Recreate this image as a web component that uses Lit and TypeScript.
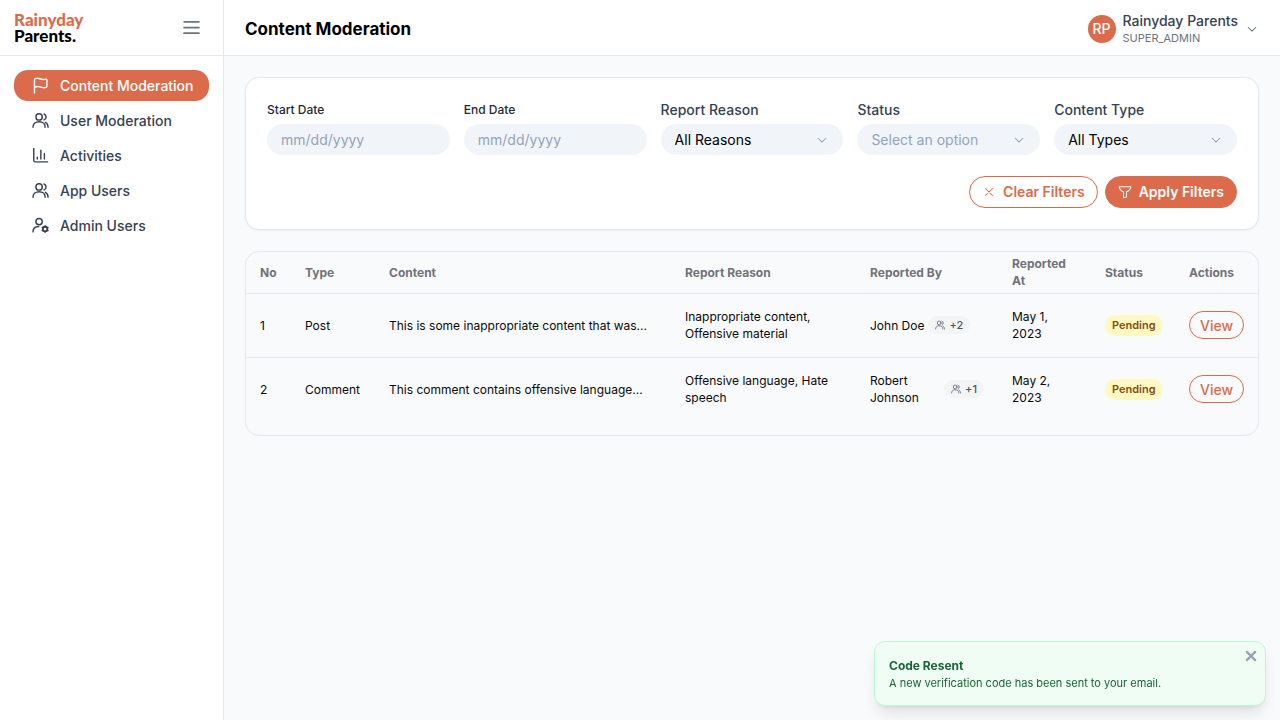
import { LitElement, html, css, svg } from "lit";
import { customElement, state } from "lit/decorators.js";

const icons = {
  flag: svg`<path d="M3.500 22.500V4c0-.8.300-1.300 1-1.600C6.500 1.500 8.500 1.600 11 2.500c2.700 1 5 1.500 8 .6 1.300-.4 2 .1 2 1.300V13c0 .8-.4 1.300-1.200 1.600-3 1-6 .4-8.600-.6-2.700-1-5.200-.8-7.700.8"/>`,
  users: svg`<circle cx="10" cy="7" r="4.500"/><path d="M1.500 21.500v-.7c0-4.200 3.700-7 8.500-7s8.500 2.800 8.500 7v.7M17 2.800a4.500 4.500 0 0 1 0 8.400M19 14.500c2.300 1.200 3.700 3.400 3.700 7"/>`,
  chart: svg`<path d="M2.500 2v17a2 2 0 0 0 2 2h17.500M7.500 14.500V17M12.500 4.500V17M17.500 9v8"/>`,
  userCog: svg`<circle cx="10" cy="6.500" r="4.500"/><path d="M1.500 21v-.5c0-4.200 3.500-6.800 8-7"/><circle cx="18.500" cy="17" r="3.200" stroke-width="2.600"/><path d="M18.500 12.300v1M18.500 20.700v1M14.400 14.700l.9.500M21.700 18.800l.9.500M14.400 19.300l.9-.5M21.700 15.200l.9-.5"/>`,
  menu: svg`<path d="M3.500 5.500h17M3.500 12h17M3.500 18.500h17"/>`,
  chevron: svg`<path d="m5.500 9 6.500 6.500L18.500 9"/>`,
  close: svg`<path d="m5 5 14 14M19 5 5 19"/>`,
  cross: svg`<path d="m6 6 12 12M18 6 6 18"/>`,
  filter: svg`<path d="M2 3h20c0 4-3.500 7-7.500 9v8.500l-5 1.500V12C5.500 10 2 7 2 3z"/>`,
};

const icon = (name: keyof typeof icons) =>
  html`<svg class="icon" viewBox="0 0 24 24" aria-hidden="true">${icons[name]}</svg>`;

const nav: { label: string; icon: keyof typeof icons }[] = [
  { label: "Content Moderation", icon: "flag" },
  { label: "User Moderation", icon: "users" },
  { label: "Activities", icon: "chart" },
  { label: "App Users", icon: "users" },
  { label: "Admin Users", icon: "userCog" },
];

const reports = [
  { no: 1, type: "Post", content: "This is some inappropriate content that was...", reason: "Inappropriate content, Offensive material", by: "John Doe", more: 2, at: "May 1, 2023", status: "Pending" },
  { no: 2, type: "Comment", content: "This comment contains offensive language...", reason: "Offensive language, Hate speech", by: "Robert Johnson", more: 1, at: "May 2, 2023", status: "Pending" },
];

@customElement("app-root")
export class AppRoot extends LitElement {
  @state() private toastOpen = true;
  @state() private current = 0;

  static styles = css`
    :host {
      display: grid;
      grid-template-columns: 224px minmax(0, 1fr);
      min-height: 100vh;
      background: #f9fafc;
      color: #09090b;
      font: 400 14px/20px Inter, sans-serif;
    }
    * { box-sizing: border-box; }
    button, input, select { font: inherit; color: inherit; margin: 0; border: 0; background: none; padding: 0; }
    button, select { cursor: pointer; }
    .icon {
      width: 14px; height: 14px; flex: none;
      fill: none; stroke: currentColor; stroke-width: 1.8;
      stroke-linecap: round; stroke-linejoin: round;
    }
    aside { background: #fff; border-right: 1px solid #e5e7eb; }
    .brand {
      display: flex; align-items: center; justify-content: space-between;
      height: 56px; padding: 0 21px 0 14px; border-bottom: 1px solid #e5e7eb;
    }
    .logo { font: 900 17px/16px Lato, sans-serif; color: #000; text-decoration: none; }
    .logo span { display: block; }
    .logo .top { color: #db6b4a; }
    .menu { display: flex; color: #6b7280; }
    .menu .icon { width: 21px; height: 21px; stroke-width: 2; }
    nav { display: flex; flex-direction: column; gap: 4px; padding: 14px; }
    .link {
      display: flex; align-items: center; gap: 11px; height: 31px; padding: 0 14px 0 18px;
      border-radius: 14px; color: #374151; font-weight: 500; text-decoration: none; white-space: nowrap;
    }
    .link .icon { width: 17px; height: 17px; stroke-width: 2; }
    .link.active { background: #db6b4a; color: #fff; }
    header {
      display: flex; align-items: center; justify-content: space-between;
      height: 56px; padding: 2px 21px 0; background: #fff; border-bottom: 1px solid #e5e7eb;
    }
    h1 { margin: 0; font-size: 17px; line-height: 24px; font-weight: 700; color: #000; }
    .account { display: flex; align-items: center; gap: 7px; text-align: left; }
    .avatar {
      display: grid; place-items: center; width: 28px; height: 28px; border-radius: 50%;
      background: #db6b4a; color: #fff; font-weight: 500;
    }
    .who { display: grid; color: #374151; font-weight: 500; line-height: 18px; }
    .role { font-size: 11px; line-height: 16px; font-weight: 400; color: #6b7280; }
    .account .icon { color: #6b7280; }
    main { display: grid; gap: 21px; padding: 21px; }
    .filters {
      display: grid; gap: 21px; padding: 21px; background: #fff;
      border: 1px solid #e5e7eb; border-radius: 14px; box-shadow: 0 1px 2px rgb(0 0 0 / 5%);
    }
    .fields { display: grid; grid-template-columns: repeat(auto-fit, minmax(160px, 1fr)); gap: 14px; align-items: end; }
    .field { display: grid; gap: 4px; color: #334155; font-weight: 500; }
    .date label { font-size: 12px; line-height: 21px; color: #1f2937; }
    .control {
      width: 100%; height: 31px; padding: 0 14px; border-radius: 16px;
      background: #f1f5f9; font-weight: 400; color: #000; outline-offset: 1px; appearance: none;
    }
    .control::placeholder, .control.empty { color: #94a3b8; opacity: 1; }
    .picker { display: grid; align-items: center; }
    .picker > * { grid-area: 1 / 1; }
    .picker .icon { justify-self: end; margin-right: 14px; color: #94a3b8; pointer-events: none; }
    .actions { display: flex; justify-content: flex-end; gap: 7px; }
    .btn {
      display: flex; align-items: center; justify-content: center; gap: 7px; height: 32px;
      padding: 0 12px; border: 1px solid #db6b4a; border-radius: 16px; color: #db6b4a;
      font-size: 14px; font-weight: 600;
    }
    .btn.solid { background: #db6b4a; color: #fff; }
    .btn.small { height: 28px; padding: 0 10px; border-radius: 14px; font-weight: 500; }
    .card { border: 1px solid #e5e7eb; border-radius: 14px; padding-bottom: 14px; overflow-x: auto; }
    table { width: 100%; min-width: 900px; border-collapse: collapse; table-layout: fixed; font-size: 12px; line-height: 17px; }
    th, td { padding: 0 14px; text-align: left; }
    th { height: 41px; color: #71717a; font-weight: 700; }
    td { height: 64px; }
    tbody tr { border-top: 1px solid #e5e7eb; }
    .c-no { width: 45px; } .c-type { width: 84px; } .c-reason { width: 185px; } .c-by { width: 142px; }
    .c-at { width: 93px; } .c-status { width: 84px; } .c-act { width: 83px; }
    .clip { overflow: hidden; text-overflow: ellipsis; white-space: nowrap; }
    .by { display: flex; align-items: center; gap: 4px; }
    .more {
      display: flex; align-items: center; gap: 4px; height: 18px; padding: 0 7px; border-radius: 9px;
      background: #f3f4f6; color: #4b5563; font-size: 11px; font-weight: 500;
    }
    .more .icon { width: 10px; height: 10px; }
    .status {
      display: inline-block; padding: 2px 7px; border-radius: 11px;
      background: #fef9c3; color: #854d0e; font-size: 11px; font-weight: 600;
    }
    .toast {
      position: fixed; right: 14px; bottom: 14px; width: 392px; max-width: calc(100vw - 28px);
      padding: 14px; border: 1px solid #bbf7d0; border-radius: 11px; background: #f0fdf4; color: #166534;
      box-shadow: 0 10px 15px -3px rgb(0 0 0 / 10%), 0 4px 6px -4px rgb(0 0 0 / 10%);
    }
    .toast strong { display: block; font-size: 12px; line-height: 19px; font-weight: 700; }
    .toast p { margin: 0; font-size: 11px; line-height: 16px; }
    .dismiss { position: absolute; top: 7px; right: 7px; display: flex; color: #9ca3af; }
    .dismiss .icon { stroke-width: 4; }
  `;

  private picker(id: string, label: string, options: string[], empty = false) {
    return html`<div class="field">
      <label for=${id}>${label}</label>
      <div class="picker">
        <select id=${id} class="control ${empty ? "empty" : ""}">
          ${options.map((o) => html`<option>${o}</option>`)}
        </select>
        ${icon("chevron")}
      </div>
    </div>`;
  }

  private date(id: string, label: string) {
    return html`<div class="field date">
      <label for=${id}>${label}</label>
      <input id=${id} class="control" type="text" placeholder="mm/dd/yyyy" />
    </div>`;
  }

  render() {
    return html`
      <aside>
        <div class="brand">
          <a class="logo" href="#"><span class="top">Rainyday</span><span>Parents.</span></a>
          <button class="menu" aria-label="Toggle sidebar">${icon("menu")}</button>
        </div>
        <nav>
          ${nav.map((n, i) => html`<a href="#" class="link ${i === this.current ? "active" : ""}"
            @click=${() => (this.current = i)}>${icon(n.icon)}<span>${n.label}</span></a>`)}
        </nav>
      </aside>
      <div>
        <header>
          <h1>Content Moderation</h1>
          <button class="account">
            <span class="avatar">RP</span>
            <span class="who">Rainyday Parents<span class="role">SUPER_ADMIN</span></span>
            ${icon("chevron")}
          </button>
        </header>
        <main>
          <section class="filters">
            <div class="fields">
              ${this.date("start", "Start Date")}
              ${this.date("end", "End Date")}
              ${this.picker("reason", "Report Reason", ["All Reasons"])}
              ${this.picker("status", "Status", ["Select an option"], true)}
              ${this.picker("type", "Content Type", ["All Types"])}
            </div>
            <div class="actions">
              <button class="btn">${icon("cross")}Clear Filters</button>
              <button class="btn solid">${icon("filter")}Apply Filters</button>
            </div>
          </section>
          <section class="card">
            <table>
              <thead>
                <tr>
                  <th class="c-no">No</th><th class="c-type">Type</th><th>Content</th>
                  <th class="c-reason">Report Reason</th><th class="c-by">Reported By</th>
                  <th class="c-at">Reported At</th><th class="c-status">Status</th><th class="c-act">Actions</th>
                </tr>
              </thead>
              <tbody>
                ${reports.map((r) => html`<tr>
                  <td>${r.no}</td>
                  <td>${r.type}</td>
                  <td class="clip">${r.content}</td>
                  <td>${r.reason}</td>
                  <td><div class="by"><span>${r.by}</span><span class="more">${icon("users")}+${r.more}</span></div></td>
                  <td>${r.at}</td>
                  <td><span class="status">${r.status}</span></td>
                  <td><button class="btn small">View</button></td>
                </tr>`)}
              </tbody>
            </table>
          </section>
        </main>
      </div>
      ${this.toastOpen
        ? html`<div class="toast" role="status">
            <strong>Code Resent</strong>
            <p>A new verification code has been sent to your email.</p>
            <button class="dismiss" aria-label="Close" @click=${() => (this.toastOpen = false)}>${icon("close")}</button>
          </div>`
        : null}
    `;
  }
}
